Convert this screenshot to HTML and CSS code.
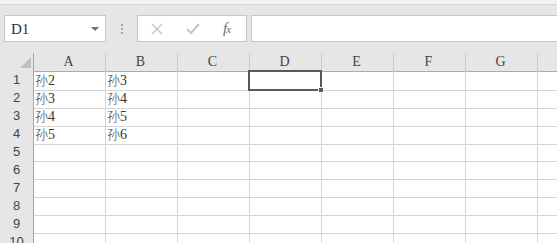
FILE: index.html
```html
<!DOCTYPE html>
<html lang="zh-CN">
<head>
    <meta charset="UTF-8">
    <title>Sheet1</title>
    <link rel="stylesheet" href="styles.css">
</head>
<body>
    <div class="top-strip"></div>

    <div class="toolbar">
        <div class="name-box">
            <span class="name-text">D1</span>
            <span class="drop-arrow"></span>
        </div>
        <div class="splitter"><span></span><span></span><span></span></div>
        <div class="fx-box">
            <svg class="fx-icon" width="12" height="12" viewBox="0 0 12 12">
                <path d="M1 1 L11 11 M11 1 L1 11" stroke="#c4c4c4" stroke-width="1.4" fill="none"/>
            </svg>
            <svg class="fx-icon" width="14" height="12" viewBox="0 0 14 12">
                <path d="M1 6 L5 10 L13 1" stroke="#c4c4c4" stroke-width="2" fill="none"/>
            </svg>
            <span class="fx-text">f<small>x</small></span>
        </div>
        <div class="formula-input"></div>
    </div>

    <div class="sheet">
        <div class="row head">
            <div class="cell corner"><span class="tri"></span></div>
            <div class="cell">A</div>
            <div class="cell">B</div>
            <div class="cell">C</div>
            <div class="cell">D</div>
            <div class="cell">E</div>
            <div class="cell">F</div>
            <div class="cell">G</div>
            <div class="cell"></div>
        </div>
        <div class="row">
            <div class="cell num">1</div>
            <div class="cell"><span class="han">孙</span>2</div>
            <div class="cell"><span class="han">孙</span>3</div>
            <div class="cell"></div>
            <div class="cell selected"><span class="handle"></span></div>
            <div class="cell"></div>
            <div class="cell"></div>
            <div class="cell"></div>
            <div class="cell"></div>
        </div>
        <div class="row">
            <div class="cell num">2</div>
            <div class="cell"><span class="han">孙</span>3</div>
            <div class="cell"><span class="han">孙</span>4</div>
            <div class="cell"></div>
            <div class="cell"></div>
            <div class="cell"></div>
            <div class="cell"></div>
            <div class="cell"></div>
            <div class="cell"></div>
        </div>
        <div class="row">
            <div class="cell num">3</div>
            <div class="cell"><span class="han">孙</span>4</div>
            <div class="cell"><span class="han">孙</span>5</div>
            <div class="cell"></div>
            <div class="cell"></div>
            <div class="cell"></div>
            <div class="cell"></div>
            <div class="cell"></div>
            <div class="cell"></div>
        </div>
        <div class="row">
            <div class="cell num">4</div>
            <div class="cell"><span class="han">孙</span>5</div>
            <div class="cell"><span class="han">孙</span>6</div>
            <div class="cell"></div>
            <div class="cell"></div>
            <div class="cell"></div>
            <div class="cell"></div>
            <div class="cell"></div>
            <div class="cell"></div>
        </div>
        <div class="row">
            <div class="cell num">5</div>
            <div class="cell"></div><div class="cell"></div><div class="cell"></div><div class="cell"></div>
            <div class="cell"></div><div class="cell"></div><div class="cell"></div><div class="cell"></div>
        </div>
        <div class="row">
            <div class="cell num">6</div>
            <div class="cell"></div><div class="cell"></div><div class="cell"></div><div class="cell"></div>
            <div class="cell"></div><div class="cell"></div><div class="cell"></div><div class="cell"></div>
        </div>
        <div class="row">
            <div class="cell num">7</div>
            <div class="cell"></div><div class="cell"></div><div class="cell"></div><div class="cell"></div>
            <div class="cell"></div><div class="cell"></div><div class="cell"></div><div class="cell"></div>
        </div>
        <div class="row">
            <div class="cell num">8</div>
            <div class="cell"></div><div class="cell"></div><div class="cell"></div><div class="cell"></div>
            <div class="cell"></div><div class="cell"></div><div class="cell"></div><div class="cell"></div>
        </div>
        <div class="row">
            <div class="cell num">9</div>
            <div class="cell"></div><div class="cell"></div><div class="cell"></div><div class="cell"></div>
            <div class="cell"></div><div class="cell"></div><div class="cell"></div><div class="cell"></div>
        </div>
        <div class="row">
            <div class="cell num">10</div>
            <div class="cell"></div><div class="cell"></div><div class="cell"></div><div class="cell"></div>
            <div class="cell"></div><div class="cell"></div><div class="cell"></div><div class="cell"></div>
        </div>
    </div>
</body>
</html>
```

FILE: styles.css
```css
* {
    margin: 0;
    padding: 0;
    box-sizing: border-box;
}

body {
    width: 557px;
    height: 243px;
    overflow: hidden;
    background: #e6e6e6;
    font-family: 'Liberation Serif', 'Noto Sans CJK SC', serif;
    color: #333;
}

.top-strip {
    height: 5px;
    background: #f3f3f3;
    border-bottom: 1px solid #d6d6d6;
}

.toolbar {
    display: flex;
    align-items: center;
    padding: 10px 0 11px 4px;
}

.name-box {
    width: 102px;
    height: 27px;
    background: #fff;
    border: 1px solid #c6c6c6;
    display: flex;
    align-items: center;
    justify-content: space-between;
    padding: 0 6px;
}

.name-text {
    font-size: 15px;
    color: #333;
    padding-top: 2px;
}

.drop-arrow {
    width: 0;
    height: 0;
    border-left: 4px solid transparent;
    border-right: 4px solid transparent;
    border-top: 4px solid #707070;
}

.splitter {
    width: 31px;
    display: flex;
    flex-direction: column;
    align-items: center;
    gap: 2px;
}

.splitter span {
    width: 2px;
    height: 2px;
    background: #a9a9a9;
}

.fx-box {
    width: 110px;
    height: 27px;
    background: #fff;
    border: 1px solid #c6c6c6;
    display: flex;
    align-items: center;
    gap: 23px;
    padding-left: 13px;
}

.fx-text {
    font-style: italic;
    font-size: 15px;
    color: #6a6a6a;
    letter-spacing: -1px;
}

.fx-text small {
    font-size: 11px;
}

.formula-input {
    flex: 1;
    height: 27px;
    margin-left: 4px;
    background: #fff;
    border: 1px solid #c6c6c6;
    border-right: none;
}

.sheet {
    background: #fff;
}

.row {
    display: grid;
    grid-template-columns: 34px repeat(8, 72px);
    height: 18px;
}

.cell {
    border-right: 1px solid #d4d4d4;
    border-bottom: 1px solid #d4d4d4;
    font-size: 14px;
    line-height: 18px;
    padding-left: 1px;
    white-space: nowrap;
    color: #333;
}

.han {
    font-family: 'Noto Sans CJK SC', sans-serif;
    font-size: 13px;
    font-weight: 300;
}

.head {
    background: #e6e6e6;
}

.head .cell {
    text-align: center;
    color: #444;
    border-right-color: #c9c9c9;
    border-bottom-color: #ababab;
    padding-left: 0;
    padding-right: 2px;
}

.head .corner {
    display: flex;
    justify-content: flex-end;
    align-items: flex-end;
    padding: 0 2px 3px 0;
    border-right-color: #a6a6a6;
}

.tri {
    width: 0;
    height: 0;
    border-left: 11px solid transparent;
    border-bottom: 11px solid #bfbfbf;
}

.num {
    background: #e6e6e6;
    text-align: center;
    font-family: 'Liberation Sans', Arial, sans-serif;
    font-size: 13px;
    color: #444;
    padding-left: 0;
    border-right-color: #a6a6a6;
    border-bottom-color: #cfcfcf;
}

.selected {
    position: relative;
}

.selected::after {
    content: '';
    position: absolute;
    left: -2px;
    top: -1px;
    right: -1px;
    bottom: -1px;
    border: 2px solid #595959;
}

.handle {
    position: absolute;
    right: -3px;
    bottom: -3px;
    width: 6px;
    height: 6px;
    background: #595959;
    border: 1px solid #fff;
    z-index: 2;
}
```
